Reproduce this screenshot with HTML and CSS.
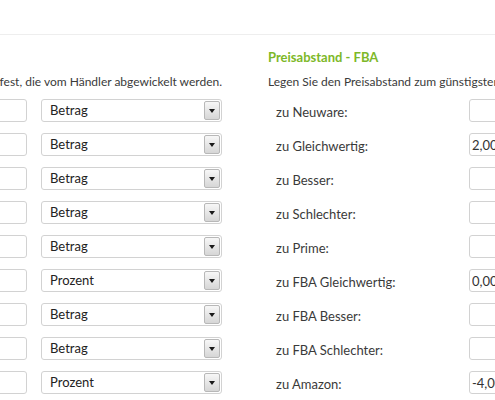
FILE: index.html
```html
<!DOCTYPE html>
<html lang="de">
<head>
<meta charset="utf-8">
<title>Preisabstand</title>
<link rel="stylesheet" href="styles.css">
</head>
<body>
<div class="topbar"></div>
<div class="cols">
  <section class="col col-left">
    <p class="desc desc-left"><span>fest, die vom Händler abgewickelt werden.</span></p>
    <div class="rows">
      <div class="row-left"><input class="field" type="text" value=""><div class="select"><span class="select-text">Betrag</span><span class="select-btn"><i class="tri"></i></span></div></div>
      <div class="row-left"><input class="field" type="text" value=""><div class="select"><span class="select-text">Betrag</span><span class="select-btn"><i class="tri"></i></span></div></div>
      <div class="row-left"><input class="field" type="text" value=""><div class="select"><span class="select-text">Betrag</span><span class="select-btn"><i class="tri"></i></span></div></div>
      <div class="row-left"><input class="field" type="text" value=""><div class="select"><span class="select-text">Betrag</span><span class="select-btn"><i class="tri"></i></span></div></div>
      <div class="row-left"><input class="field" type="text" value=""><div class="select"><span class="select-text">Betrag</span><span class="select-btn"><i class="tri"></i></span></div></div>
      <div class="row-left"><input class="field" type="text" value=""><div class="select"><span class="select-text">Prozent</span><span class="select-btn"><i class="tri"></i></span></div></div>
      <div class="row-left"><input class="field" type="text" value=""><div class="select"><span class="select-text">Betrag</span><span class="select-btn"><i class="tri"></i></span></div></div>
      <div class="row-left"><input class="field" type="text" value=""><div class="select"><span class="select-text">Betrag</span><span class="select-btn"><i class="tri"></i></span></div></div>
      <div class="row-left"><input class="field" type="text" value=""><div class="select"><span class="select-text">Prozent</span><span class="select-btn"><i class="tri"></i></span></div></div>
    </div>
  </section>
  <section class="col col-right">
    <h3 class="heading">Preisabstand - FBA</h3>
    <p class="desc">Legen Sie den Preisabstand zum günstigsten Angebot fest</p>
    <div class="rows">
      <div class="row-right"><label class="lbl">zu Neuware:</label><input class="field field-r" type="text" value=""></div>
      <div class="row-right"><label class="lbl">zu Gleichwertig:</label><input class="field field-r" type="text" value="2,00"></div>
      <div class="row-right"><label class="lbl">zu Besser:</label><input class="field field-r" type="text" value=""></div>
      <div class="row-right"><label class="lbl">zu Schlechter:</label><input class="field field-r" type="text" value=""></div>
      <div class="row-right"><label class="lbl">zu Prime:</label><input class="field field-r" type="text" value=""></div>
      <div class="row-right"><label class="lbl">zu FBA Gleichwertig:</label><input class="field field-r" type="text" value="0,00"></div>
      <div class="row-right"><label class="lbl">zu FBA Besser:</label><input class="field field-r" type="text" value=""></div>
      <div class="row-right"><label class="lbl">zu FBA Schlechter:</label><input class="field field-r" type="text" value=""></div>
      <div class="row-right"><label class="lbl">zu Amazon:</label><input class="field field-r" type="text" value="-4,00"></div>
    </div>
  </section>
</div>
</body>
</html>
```

FILE: styles.css
```css
html, body {
  margin: 0;
  padding: 0;
}
body {
  width: 495px;
  height: 400px;
  overflow: hidden;
  background: #ffffff;
  font-family: Lato, "Liberation Sans", sans-serif;
  font-size: 13px;
  color: #3a3a3a;
}
.topbar {
  height: 34px;
  border-bottom: 1px solid #eeeeee;
}
.cols {
  display: flex;
  gap: 46px;
  margin-left: -270px;
}
.col {
  flex: none;
  display: flex;
  flex-direction: column;
}
.col-left {
  width: 492px;
  padding-top: 31px;
}
.col-right {
  width: 480px;
}
.heading {
  margin: 13px 0 0 0;
  height: 18px;
  line-height: 18px;
  font-size: 13px;
  font-weight: 700;
  color: #7db828;
}
.desc {
  margin: 7px 0 0 0;
  height: 18px;
  line-height: 18px;
  font-size: 12px;
  white-space: nowrap;
}
.desc-left {
  display: flex;
  justify-content: flex-end;
}
.rows {
  margin-top: 8px;
  display: flex;
  flex-direction: column;
  gap: 11px;
}
.row-left {
  display: flex;
  justify-content: flex-end;
  gap: 14px;
  height: 23px;
}
.field {
  box-sizing: border-box;
  width: 60px;
  height: 23px;
  margin: 0;
  padding: 0 2px;
  border: 1px solid #d2d2d2;
  border-radius: 3px;
  background: #fff;
  font-family: inherit;
  font-size: 13px;
  color: #333;
  outline: none;
}
.select {
  box-sizing: border-box;
  width: 181px;
  height: 23px;
  border: 1px solid #d2d2d2;
  border-radius: 3px;
  display: flex;
  align-items: stretch;
  background: #fff;
  overflow: hidden;
}
.select-text {
  flex: 1;
  padding-left: 8px;
  line-height: 21px;
  color: #222;
}
.select-btn {
  width: 14px;
  margin: 1px;
  border: 1px solid #b8b8b8;
  border-radius: 2px;
  background: linear-gradient(#f7f7f7, #d6d6d6);
  display: flex;
  align-items: center;
  justify-content: center;
}
.tri {
  width: 0;
  height: 0;
  border-left: 3px solid transparent;
  border-right: 3px solid transparent;
  border-top: 4px solid #1a1a1a;
}
.row-right {
  display: flex;
  height: 23px;
}
.lbl {
  box-sizing: border-box;
  width: 201px;
  padding-left: 8px;
  padding-top: 4px;
  line-height: 18px;
  white-space: nowrap;
}
.field-r {
  width: 70px;
}
```
